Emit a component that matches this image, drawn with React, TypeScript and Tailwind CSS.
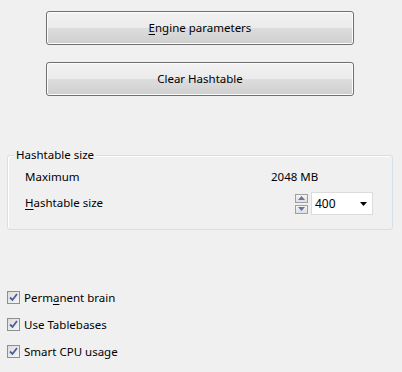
import React from "react"

const font = { fontFamily: '"Segoe UI", "Noto Sans", "Liberation Sans", sans-serif' }

const Btn = ({ children }: { children: React.ReactNode }) => (
  <button className="w-[308px] h-[34px] ml-[46px] rounded-[3px] border border-[#707070] bg-[linear-gradient(#f2f2f2_0%,#ebebeb_49%,#dddddd_50%,#cfcfcf_100%)] shadow-[inset_0_0_0_1px_#fcfcfc] text-[11.5px] text-black flex items-center justify-center">
    {children}
  </button>
)

const Check = ({ label }: { label: React.ReactNode }) => (
  <div className="flex items-center h-[13px] ml-[7px] gap-[4px] text-[11.5px] text-black">
    <span className="w-[13px] h-[13px] border border-[#8e8f8f] bg-[linear-gradient(135deg,#dcdcdc,#f6f6f6)] flex items-center justify-center">
      <svg width="9" height="9" viewBox="0 0 9 9">
        <path d="M1 4.5 L3.5 7 L8 1" stroke="#4a5f97" strokeWidth="1.8" fill="none" />
      </svg>
    </span>
    <span>{label}</span>
  </div>
)

export default function App() {
  return (
    <div className="w-[402px] h-[372px] bg-[#f0f0f0] pt-[11px] overflow-hidden" style={font}>
      <Btn>
        <span><span className="underline underline-offset-2">E</span>ngine parameters</span>
      </Btn>
      <div className="h-[17px]" />
      <Btn>Clear Hashtable</Btn>

      <div className="relative mt-[59px] ml-[7px] w-[386px] h-[75px] rounded-[3px] border border-[#d5dfe5] shadow-[inset_1px_1px_0_#ffffff]">
        <span className="absolute -top-[10px] left-[6px] px-[2px] bg-[#f0f0f0] text-[11.5px] text-black leading-[18px]">Hashtable size</span>
        <div className="flex items-center h-[16px] mt-[13px] ml-[17px] text-[11.5px] text-black">
          <span className="w-[246px]">Maximum</span>
          <span>2048 MB</span>
        </div>
        <div className="flex items-center mt-[7px] ml-[17px] text-[11.5px] text-black">
          <span className="w-[270px] -mt-[1px]"><span className="underline underline-offset-2">H</span>ashtable size</span>
          <div className="flex flex-col gap-[2px] mr-[3px]">
            <span className="w-[13px] h-[9px] border border-[#a0a0a0] bg-[linear-gradient(#f4f4f4,#dedede)] flex items-center justify-center">
              <svg width="7" height="4" viewBox="0 0 7 4"><path d="M0 4 L3.5 0 L7 4 Z" fill="#6472b0" /></svg>
            </span>
            <span className="w-[13px] h-[9px] border border-[#a0a0a0] bg-[linear-gradient(#f4f4f4,#dedede)] flex items-center justify-center">
              <svg width="7" height="4" viewBox="0 0 7 4"><path d="M0 0 L7 0 L3.5 4 Z" fill="#6472b0" /></svg>
            </span>
          </div>
          <div className="w-[62px] h-[23px] bg-white border border-[#dcdcdc] flex items-center pl-[3px] pr-[5px] justify-between text-[12px]">
            <span>400</span>
            <svg width="7" height="4" viewBox="0 0 7 4"><path d="M0 0 L7 0 L3.5 4 Z" fill="#000" /></svg>
          </div>
        </div>
      </div>

      <div className="mt-[61px] flex flex-col gap-[14px]">
        <Check label={<>Perm<span className="underline underline-offset-2">a</span>nent brain</>} />
        <Check label="Use Tablebases" />
        <Check label="Smart CPU usage" />
      </div>
    </div>
  )
}
